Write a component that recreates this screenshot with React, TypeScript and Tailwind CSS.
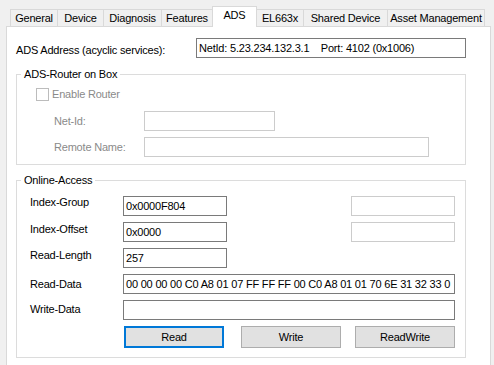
import React from "react";

const tabs = [
  { name: "General", w: "w-[47px]" },
  { name: "Device", w: "w-[46px]" },
  { name: "Diagnosis", w: "w-[58px]" },
  { name: "Features", w: "w-[51px]" },
];
const tabsAfter = [
  { name: "Shared Device", w: "w-[84px]" },
];

const Field = ({ className, value }: { className: string; value?: string }) => (
  <div
    className={`h-[20px] border border-[#7a7a7a] bg-white pl-[2px] leading-[18px] whitespace-pre overflow-hidden ${className}`}
  >
    {value}
  </div>
);

const OffField = ({ className }: { className: string }) => (
  <div className={`h-[20px] border border-[#cccccc] bg-white ${className}`} />
);

const Btn = ({ label, active, className }: { label: string; active?: boolean; className: string }) => (
  <button
    className={`w-[100px] h-[22px] bg-[#e1e1e1] text-black ${
      active ? "border-2 border-[#0078d7]" : "border border-[#adadad]"
    } ${className}`}
  >
    {label}
  </button>
);

const App = () => {
  return (
    <div className="w-[494px] h-[365px] overflow-hidden bg-[#f0f0f0] text-black text-[11px] leading-[13px] tracking-[-0.2px] font-['Liberation_Sans',Arial,sans-serif]">
      {/* tab strip */}
      <div className="flex items-end h-[26px] pl-[10px]">
        {tabs.map((t) => (
          <div
            key={t.name}
            className={`${t.w} h-[17px] flex items-center justify-center border-t border-l border-[#d9d9d9] bg-[#f0f0f0]`}
          >
            {t.name}
          </div>
        ))}
        <div className="relative z-10 w-[45px] h-[21px] -mb-px flex justify-center pt-[2px] border-t border-l border-r border-[#d9d9d9] bg-white">
          ADS
        </div>
        <div className="w-[46px] h-[17px] flex items-center justify-center border-t border-[#d9d9d9] bg-[#f0f0f0]">
          EL663x
        </div>
        {tabsAfter.map((t) => (
          <div
            key={t.name}
            className={`${t.w} h-[17px] flex items-center justify-center border-t border-l border-[#d9d9d9] bg-[#f0f0f0]`}
          >
            {t.name}
          </div>
        ))}
        <div className="w-[98px] h-[17px] flex items-center justify-center border-t border-l border-r border-[#d9d9d9] bg-[#f0f0f0]">
          Asset Management
        </div>
      </div>

      {/* page */}
      <div className="ml-[6px] w-[485px] h-[340px] bg-white border border-b-0 border-[#d9d9d9] pl-[9px]">
        <div className="flex items-start mt-[11px]">
          <div className="w-[180px] mt-[6px]">ADS Address (acyclic services):</div>
          <Field className="w-[270px]" value={"NetId: 5.23.234.132.3.1    Port: 4102 (0x1006)"} />
        </div>

        <fieldset className="mt-[10px] w-[450px] border border-[#dcdcdc] pb-[7px]">
          <legend className="ml-[4px] px-[3px] leading-[13px]">ADS-Router on Box</legend>
          <div className="flex items-center mt-[7px] ml-[19px] h-[13px] text-[#8a8a8a]">
            <div className="w-[13px] h-[13px] border border-[#bcbcbc] bg-white mr-[3px]" />
            Enable Router
          </div>
          <div className="flex items-start mt-[10px] ml-[37px] text-[#8a8a8a]">
            <div className="w-[90px] mt-[4px]">Net-Id:</div>
            <OffField className="w-[131px]" />
          </div>
          <div className="flex items-start mt-[6px] ml-[37px] text-[#8a8a8a]">
            <div className="w-[90px] mt-[4px]">Remote Name:</div>
            <OffField className="w-[285px]" />
          </div>
        </fieldset>

        <fieldset className="mt-[9px] w-[450px] border border-[#dcdcdc] pb-[9px]">
          <legend className="ml-[4px] px-[3px] leading-[13px]">Online-Access</legend>
          <div className="flex items-start mt-[9px] ml-[13px]">
            <div className="w-[93px] mt-[0px]">Index-Group</div>
            <Field className="w-[104px]" value="0x0000F804" />
            <OffField className="w-[104px] ml-[124px]" />
          </div>
          <div className="flex items-start mt-[6px] ml-[13px]">
            <div className="w-[93px] mt-[1px]">Index-Offset</div>
            <Field className="w-[104px]" value="0x0000" />
            <OffField className="w-[104px] ml-[124px]" />
          </div>
          <div className="flex items-start mt-[6px] ml-[13px]">
            <div className="w-[93px] mt-[1px]">Read-Length</div>
            <Field className="w-[104px]" value="257" />
          </div>
          <div className="flex items-start mt-[6px] ml-[13px]">
            <div className="w-[93px] mt-[4px]">Read-Data</div>
            <Field
              className="w-[332px]"
              value="00 00 00 00 C0 A8 01 07 FF FF FF 00 C0 A8 01 01 70 6E 31 32 33 0"
            />
          </div>
          <div className="flex items-start mt-[6px] ml-[13px]">
            <div className="w-[93px] mt-[3px]">Write-Data</div>
            <Field className="w-[332px]" />
          </div>
          <div className="flex mt-[6px] ml-[107px]">
            <Btn label="Read" active className="" />
            <Btn label="Write" className="ml-[17px]" />
            <Btn label="ReadWrite" className="ml-[14px]" />
          </div>
        </fieldset>
      </div>
    </div>
  );
};

export default App;
